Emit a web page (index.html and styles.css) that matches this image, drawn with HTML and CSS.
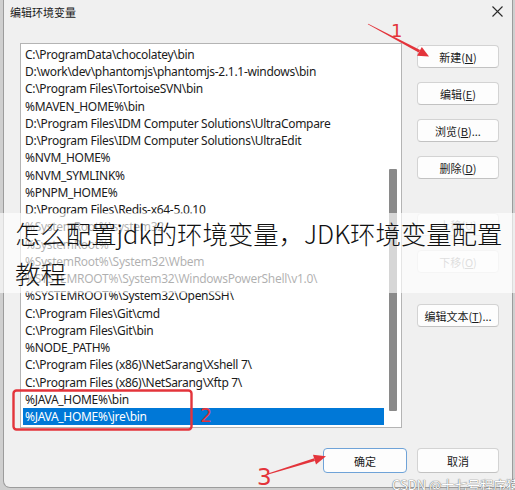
FILE: index.html
```html
<!DOCTYPE html>
<html lang="zh-CN">
<head>
<meta charset="utf-8">
<title>编辑环境变量</title>
<link rel="stylesheet" href="styles.css">
</head>
<body>
<div class="window">
  <div class="titlebar">
    <span class="title">编辑环境变量</span>
    <svg class="close" width="11" height="11" viewBox="0 0 11 11"><path d="M0.5 0.5 L10.5 10.5 M10.5 0.5 L0.5 10.5" stroke="#2a2a2a" stroke-width="1.1" fill="none"/></svg>
  </div>
  <div class="content">
    <div class="listbox">
      <ul class="rows">
        <li class="row">C:\ProgramData\chocolatey\bin</li>
        <li class="row">D:\work\dev\phantomjs\phantomjs-2.1.1-windows\bin</li>
        <li class="row">C:\Program Files\TortoiseSVN\bin</li>
        <li class="row">%MAVEN_HOME%\bin</li>
        <li class="row">D:\Program Files\IDM Computer Solutions\UltraCompare</li>
        <li class="row">D:\Program Files\IDM Computer Solutions\UltraEdit</li>
        <li class="row">%NVM_HOME%</li>
        <li class="row">%NVM_SYMLINK%</li>
        <li class="row">%PNPM_HOME%</li>
        <li class="row">D:\Program Files\Redis-x64-5.0.10</li>
        <li class="row">%SystemRoot%\system32</li>
        <li class="row">%SystemRoot%</li>
        <li class="row">%SystemRoot%\System32\Wbem</li>
        <li class="row">%SYSTEMROOT%\System32\WindowsPowerShell\v1.0\</li>
        <li class="row">%SYSTEMROOT%\System32\OpenSSH\</li>
        <li class="row">C:\Program Files\Git\cmd</li>
        <li class="row">C:\Program Files\Git\bin</li>
        <li class="row">%NODE_PATH%</li>
        <li class="row">C:\Program Files (x86)\NetSarang\Xshell 7\</li>
        <li class="row">C:\Program Files (x86)\NetSarang\Xftp 7\</li>
        <li class="row">%JAVA_HOME%\bin</li>
        <li class="row selected">%JAVA_HOME%\jre\bin</li>
      </ul>
      <div class="scroll"><div class="thumb"></div></div>
    </div>
    <div class="side">
      <div class="btn">新建(<u>N</u>)</div>
      <div class="btn">编辑(<u>E</u>)</div>
      <div class="btn">浏览(<u>B</u>)...</div>
      <div class="btn">删除(<u>D</u>)</div>
      <div class="btn disabled group-a">上移(<u>U</u>)</div>
      <div class="btn disabled">下移(<u>O</u>)</div>
      <div class="btn group-b">编辑文本(<u>T</u>)...</div>
    </div>
  </div>
  <div class="footer">
    <div class="btn big default">确定</div>
    <div class="btn big">取消</div>
  </div>
</div>

<div class="caption">怎么配置jdk的环境变量，JDK环境变量配置<br>教程</div>

<svg class="marks" width="515" height="490" viewBox="0 0 515 490">
  <g fill="#e3343b">
    <polygon points="367.8,24.3 368.2,23.7 420.1,50.0 418.7,52.6"/>
    <polygon points="429,56.5 417.0,55.7 421.8,46.9"/>
    <polygon points="268.1,474.4 267.9,473.6 314.1,458.2 314.9,461.0"/>
    <polygon points="326,456.3 316.0,464.4 313.0,454.8"/>
  </g>
  <rect x="13.5" y="390.5" width="178" height="39" rx="3" fill="none" stroke="#e3343b" stroke-width="2.4"/>
  <text x="391" y="37" class="num n1">1</text>
  <text x="200" y="422" class="num n2">2</text>
  <text x="257" y="485" class="num n3">3</text>
</svg>

<div class="watermark">CSDN @十七号程序猿</div>
</body>
</html>
```

FILE: styles.css
```css
html, body {
  margin: 0;
  padding: 0;
}

body {
  width: 515px;
  height: 490px;
  overflow: hidden;
  position: relative;
  background: #cfcfcf;
  font-family: "Noto Sans", "Noto Sans CJK SC", sans-serif;
}

.window {
  margin-left: 3px;
  width: 510px;
  height: 488px;
  box-sizing: border-box;
  background: #f0f0f0;
  border: 1px solid #9c9c9c;
  border-top: none;
  border-radius: 0 0 7px 7px;
  display: flex;
  flex-direction: column;
}

.titlebar {
  height: 23px;
  display: flex;
  align-items: center;
  justify-content: space-between;
  padding: 0 9px 0 6px;
}

.title {
  font-family: "Noto Sans CJK SC", sans-serif;
  font-size: 11px;
  color: #1a1a1a;
}

.close {
  display: block;
}

.content {
  display: flex;
  align-items: flex-start;
  padding: 20px 0 0 16px;
}

.listbox {
  width: 382px;
  height: 385px;
  box-sizing: border-box;
  border: 1px solid #b4b4b4;
  background: #fff;
  display: flex;
}

.rows {
  list-style: none;
  margin: 0;
  padding: 1.75px 0 0 2px;
  width: 363px;
  box-sizing: border-box;
}

.row {
  height: 17.25px;
  line-height: 17.25px;
  padding-left: 2px;
  font-size: 12px;
  letter-spacing: -0.3px;
  color: #1b1b1b;
  white-space: nowrap;
}

.row.selected {
  background: #0078d7;
  color: #fff;
}

.scroll {
  width: 17px;
  display: flex;
  justify-content: center;
  padding-top: 125px;
  box-sizing: border-box;
}

.thumb {
  width: 8px;
  height: 242px;
  background: #8a8a8a;
  border-radius: 1px;
}

.side {
  margin-left: 15px;
  padding-top: 2px;
  width: 82px;
  display: flex;
  flex-direction: column;
  gap: 14px;
}

.btn {
  height: 23px;
  box-sizing: border-box;
  border: 1px solid #d3d3d3;
  border-bottom-color: #c2c2c2;
  border-radius: 4px;
  background: #fdfdfd;
  display: flex;
  align-items: center;
  justify-content: center;
  font-family: "Noto Sans CJK SC", sans-serif;
  font-size: 11px;
  color: #1a1a1a;
  white-space: nowrap;
}

.btn u {
  text-underline-offset: 1px;
}

.btn.disabled {
  color: #a3a3a3;
  background: #f9f9f9;
  border-color: #e3e3e3;
}

.group-a {
  margin-top: 20px;
}

.group-b {
  margin-top: 17px;
}

.footer {
  display: flex;
  justify-content: flex-end;
  gap: 10px;
  padding: 20px 13px 0 0;
}

.btn.big {
  width: 82px;
  height: 25px;
}

.btn.default {
  width: 84px;
  border-color: #6fa3d8;
}

.caption {
  position: absolute;
  left: 0;
  top: 213px;
  width: 515px;
  height: 80px;
  box-sizing: border-box;
  padding-left: 15px;
  background: rgba(255, 255, 255, 0.65);
  font-family: "Noto Sans CJK SC", sans-serif;
  font-weight: 300;
  font-size: 25.4px;
  line-height: 40px;
  color: #111;
  white-space: nowrap;
}

.marks {
  position: absolute;
  left: 0;
  top: 0;
}

.num {
  font-family: "DejaVu Sans", sans-serif;
  fill: #e3343b;
}

.n1 { font-size: 18px; }
.n2 { font-size: 19px; }
.n3 { font-size: 23px; }

.watermark {
  position: absolute;
  left: 392px;
  top: 475px;
  font-family: "Noto Sans CJK SC", sans-serif;
  font-size: 13px;
  color: #ffffff;
  text-shadow: 0 0 1px #666, 0 0 1px #666;
  white-space: nowrap;
}
```
